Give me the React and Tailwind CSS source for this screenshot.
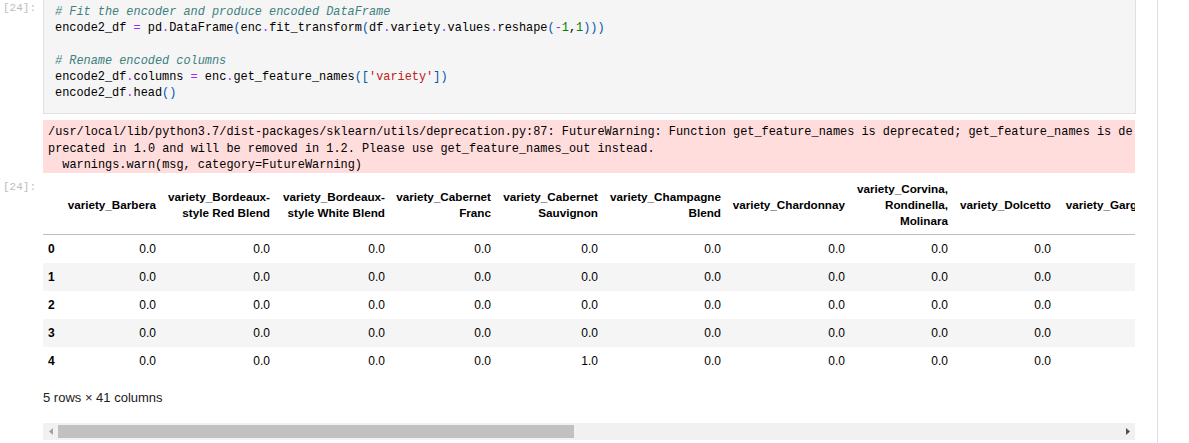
import React from 'react';

// syntax colours, JupyterLab light theme
const C = ({ children }) => <span className="italic text-[#408080]">{children}</span>;
const Op = ({ children }) => <span className="text-[#aa22ff]">{children}</span>;
const B = ({ children }) => <span className="text-[#0055aa]">{children}</span>;
const N = ({ children }) => <span className="text-[#008000]">{children}</span>;
const S = ({ children }) => <span className="text-[#ba2121]">{children}</span>;

const columns = [
  { w: 'w-[100px]', lines: ['variety_Barbera'] },
  { w: 'w-[114px]', lines: ['variety_Bordeaux-', 'style Red Blend'] },
  { w: 'w-[115px]', lines: ['variety_Bordeaux-', 'style White Blend'] },
  { w: 'w-[106px]', lines: ['variety_Cabernet', 'Franc'] },
  { w: 'w-[107px]', lines: ['variety_Cabernet', 'Sauvignon'] },
  { w: 'w-[123px]', lines: ['variety_Champagne', 'Blend'] },
  { w: 'w-[124px]', lines: ['variety_Chardonnay'] },
  { w: 'w-[103px]', lines: ['variety_Corvina,', 'Rondinella,', 'Molinara'] },
  { w: 'w-[103px]', lines: ['variety_Dolcetto'] },
  { w: 'w-[120px]', lines: ['variety_Garganega'] },
];

// row 4 has the single 1.0, under the Cabernet Sauvignon column
const rows = [0, 1, 2, 3, 4].map((i) =>
  columns.map((_, c) => (i === 4 && c === 4 ? '1.0' : '0.0'))
);

const Prompt = ({ className = '' }) => (
  <div className={`w-[43px] shrink-0 pl-[3px] text-[11px] leading-[16px] text-[#bdbdbd] ${className}`}
    style={{ fontFamily: '"Liberation Mono", monospace' }}>
    [24]:
  </div>
);

export default function App() {
  const mono = { fontFamily: '"Liberation Mono", "DejaVu Sans Mono", monospace' };
  const sans = { fontFamily: '"Liberation Sans", Arial, sans-serif' };

  return (
    <div className="h-[443px] w-[1189px] overflow-hidden bg-white">
      <div className="h-[443px] w-[1158px] border-r border-[#dcdfe4]">
        {/* input cell */}
        <div className="flex">
          <Prompt className="pt-0" />
          <div className="h-[114px] w-[1093px] border border-t-0 border-[#e0e0e0] bg-[#f5f5f5] pl-[11px] pt-[4px] text-[11.9px] leading-[16.3px] text-[#000] whitespace-pre" style={mono}>
            <div><C># Fit the encoder and produce encoded DataFrame</C></div>
            <div>encode2_df <Op>=</Op> pd<Op>.</Op>DataFrame<B>(</B>enc<Op>.</Op>fit_transform<B>(</B>df<Op>.</Op>variety<Op>.</Op>values<Op>.</Op>reshape<B>(</B><Op>-</Op><N>1</N>,<N>1</N><B>)))</B></div>
            <div> </div>
            <div><C># Rename encoded columns</C></div>
            <div>encode2_df<Op>.</Op>columns <Op>=</Op> enc<Op>.</Op>get_feature_names<B>([</B><S>'variety'</S><B>])</B></div>
            <div>encode2_df<Op>.</Op>head<B>()</B></div>
          </div>
        </div>

        {/* stderr */}
        <div className="ml-[43px] mt-[6px] h-[53px] w-[1092px] overflow-hidden bg-[#ffdddd] pl-[5px] pt-[4px] text-[11.9px] leading-[16.5px] text-[#000] whitespace-pre" style={mono}>
          <div>/usr/local/lib/python3.7/dist-packages/sklearn/utils/deprecation.py:87: FutureWarning: Function get_feature_names is deprecated; get_feature_names is de</div>
          <div>precated in 1.0 and will be removed in 1.2. Please use get_feature_names_out instead.</div>
          <div>  warnings.warn(msg, category=FutureWarning)</div>
        </div>

        {/* output */}
        <div className="mt-[3px] flex">
          <Prompt className="pt-[3px]" />
          <div className="w-[1092px]" style={sans}>
            <div className="w-[1092px] overflow-hidden text-[12px] text-[#000]">
              <div className="flex w-max items-center border-b border-[#bdbdbd] py-[5px] text-[11.7px] leading-[16px] font-bold">
                <div className="w-[19px] shrink-0" />
                {columns.map((col, i) => (
                  <div key={i} className={`${col.w} shrink-0 whitespace-nowrap pr-[6px] text-right`}>
                    {col.lines.map((l) => <div key={l}>{l}</div>)}
                  </div>
                ))}
              </div>
              {rows.map((vals, r) => (
                <div key={r} className={`flex h-[28px] w-max items-center ${r % 2 === 1 ? 'bg-[#f5f5f5]' : 'bg-white'}`}>
                  <div className="w-[19px] shrink-0 pl-[5px] font-bold">{r}</div>
                  {vals.map((v, c) => (
                    <div key={c} className={`${columns[c].w} shrink-0 pr-[6px] text-right`}>{c === 9 ? '' : v}</div>
                  ))}
                </div>
              ))}
            </div>

            <div className="mt-[14px] text-[13px] leading-[18px] text-[#212121]">5 rows × 41 columns</div>

            {/* horizontal scrollbar */}
            <div className="mt-[16px] flex h-[17px] w-[1092px] items-center bg-[#f1f1f1]">
              <div className="flex h-[17px] w-[15px] items-center justify-center">
                <svg width="4" height="7" viewBox="0 0 4 7"><path d="M4 0 L0 3.5 L4 7 Z" fill="#a3a3a3" /></svg>
              </div>
              <div className="h-[13px] w-[516px] bg-[#c1c1c1]" />
              <div className="flex-1" />
              <div className="flex h-[17px] w-[15px] items-center justify-center">
                <svg width="4" height="7" viewBox="0 0 4 7"><path d="M0 0 L4 3.5 L0 7 Z" fill="#505050" /></svg>
              </div>
            </div>
          </div>
        </div>
      </div>
    </div>
  );
}
